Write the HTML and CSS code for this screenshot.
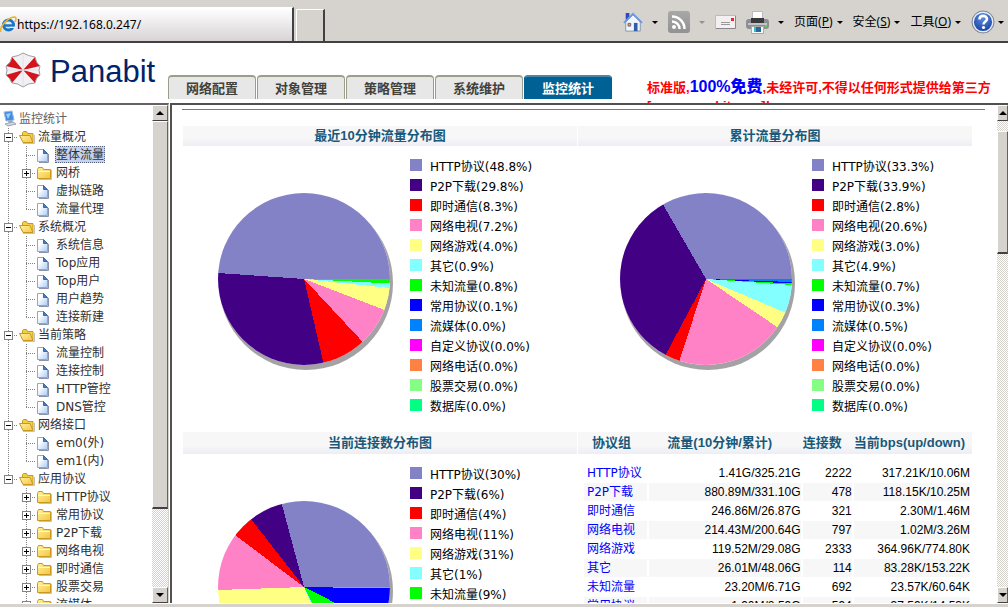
FILE: index.html
```html
<!DOCTYPE html>
<html lang="zh-CN">
<head>
<meta charset="utf-8">
<title>Panabit</title>
<link rel="stylesheet" href="styles.css">
</head>
<body>
<svg class="defs" aria-hidden="true">
  <defs>
    <linearGradient id="gold" x1="0" y1="0" x2="1" y2="1"><stop offset="0" stop-color="#fff3a0"/><stop offset="1" stop-color="#f4c440"/></linearGradient>
    <linearGradient id="paper" x1="0" y1="0" x2="1" y2="1"><stop offset="0.3" stop-color="#fff"/><stop offset="1" stop-color="#a9cbf5"/></linearGradient>
    <linearGradient id="grey" x1="0" y1="0" x2="0" y2="1"><stop offset="0" stop-color="#a8a8a8"/><stop offset="1" stop-color="#929292"/></linearGradient>
    <radialGradient id="orb" cx="0.5" cy="0.3" r="0.7"><stop offset="0" stop-color="#5b8ee0"/><stop offset="1" stop-color="#143a9c"/></radialGradient>
    <symbol id="page" viewBox="0 0 18 18"><path d="M3 16.500h9.500V8" fill="none" stroke="#8b93a8"/><path d="M1.500 3.500h6l4 4v8h-10z" fill="url(#paper)" stroke="#86a9dc"/><path d="M7.500 3.500v4h4z" fill="#4a7cc4" stroke="#3f68a8"/></symbol>
    <symbol id="folder" viewBox="0 0 18 18"><path d="M3 15.500h12.500V6" fill="none" stroke="#c5c1b5"/><path d="M1.500 14.500V5.500l1-2h4l1 2h7v9z" fill="url(#gold)" stroke="#c9981e"/><path d="M2 7.500h12" stroke="#fff8c8"/></symbol>
    <symbol id="open" viewBox="0 0 18 18"><path d="M5 15.500h11.500V7" fill="none" stroke="#c5c1b5"/><path d="M4.500 13V4.500l1-1h3l1 2h5.500v9z" fill="#f5cd4c" stroke="#c9981e"/><path d="M1.500 7.500h10.500l3 7h-10z" fill="url(#gold)" stroke="#c9981e"/></symbol>
  </defs>
</svg>
<header class="toolbar">
  <label class="address">
    <svg width="17" height="17" viewBox="0 0 17 17"><circle cx="8.500" cy="9" r="5" fill="none" stroke="#1876c8" stroke-width="3"/><path d="M4 9.500h10" stroke="#1876c8" stroke-width="2.500"/><path d="M10.500 12h5v-1.300h-5z" fill="#f0ecef"/><path d="M1 16C-1 11 8 1 15 1c2 1 1 3 0 5" fill="none" stroke="#e9b52b" stroke-width="1.600"/></svg>
    <input type="text" value="https://192.168.0.247/" aria-label="Address">
  </label>
  <div class="new-tab"></div>
  <nav class="commands">
    <button class="command" aria-label="Home"><svg width="20" height="22" viewBox="0 0 22 22"><path d="M3 1h4v7L3 11z" fill="#3046c8"/><path d="M3 11l8-8 8 8v10H3z" fill="#f1f4fc" stroke="#8090b0"/><path d="M1 12L11 2l10 10" fill="none" stroke="#6a9be0" stroke-width="2"/><path d="M12 12h4v9h-4z" fill="#305da8"/><path d="M5.500 12.500h3v3h-3z" fill="#d8a060" stroke="#666"/></svg><i class="caret"></i></button>
    <button class="command" aria-label="Feeds"><svg width="22" height="22" viewBox="0 0 22 22"><rect width="22" height="22" rx="3" fill="url(#grey)"/><circle cx="6" cy="16" r="2" fill="#fff"/><path d="M4 10.500a7.500 7.500 0 0 1 7.500 7.500M4 5.500A12.500 12.500 0 0 1 16.500 18" fill="none" stroke="#fff" stroke-width="2.500"/></svg><i class="caret dim"></i></button>
    <button class="command" aria-label="Mail"><svg width="21" height="22" viewBox="0 0 21 22"><path d="M.5 4.500h20v13H.5z" fill="#f4f0f2" stroke="#bbb"/><path d="M1 17.500h19.500V5" fill="none" stroke="#888"/><path d="M16 7h3v3h-3z" fill="#e02c24"/><path d="M6 11.500h9M6 13.500h9" stroke="#999"/></svg></button>
    <button class="command" aria-label="Print"><svg width="23" height="23" viewBox="0 0 23 23"><path d="M6.500.5h10v9h-10z" fill="#fff" stroke="#bbb"/><rect y="8" width="23" height="10" rx="3" fill="#8d8e92"/><path d="M5 7h13v5H5z" fill="#3a3a3c"/><path d="M2 12h19v2H2z" fill="#c4c4c8"/><path d="M19 14h2v2h-2z" fill="#42e750"/><path d="M5.500 15.500h12v7h-12z" fill="#f8f8f8" stroke="#aaa"/><path d="M8 16h2v5H8z" fill="#35bcd0"/><path d="M10 16h5v5h-5z" fill="#286a98"/></svg><i class="caret"></i></button>
    <button class="command menu"><span>页面(<u>P</u>)</span><i class="caret"></i></button>
    <button class="command menu"><span>安全(<u>S</u>)</span><i class="caret"></i></button>
    <button class="command menu"><span>工具(<u>O</u>)</span><i class="caret"></i></button>
    <button class="command help" aria-label="Help"><svg width="24" height="24" viewBox="0 0 24 24"><circle cx="12" cy="12" r="11" fill="url(#orb)" stroke="#888" stroke-width="1"/><circle cx="12" cy="12" r="9.800" fill="none" stroke="#e8eefa" stroke-width="1.400"/><path d="M8.500 9.500c0-5 7.500-4.500 7.500-.5 0 2.500-3.500 2.500-3.500 5.500" fill="none" stroke="#fff" stroke-width="2.600"/><circle cx="12.500" cy="17.500" r="1.600" fill="#fff"/></svg><i class="caret"></i></button>
  </nav>
</header>
<div class="banner">
  <div class="brand">
    <svg width="36" height="36" viewBox="0 0 36 36"><path d="M7 5Q14 4 18 1q5 3 12 4 1 6 5 9-2 4 0 9-4 2-5 8-7 0-12 4-5-4-11-4-2-5-6-8 2-5 0-9 5-3 6-9z" fill="#f1f1f3"/><path d="M30 5q1 6 5 9L18 18zM35 23q-4 2-5 8L18 18zM7 31q-2-5-6-8l17-5zM1 14q5-3 6-9l11 13z" fill="#d5131c"/><path d="M18 18V2M18 18h16M18 18v16M18 18H2" stroke="#e2e2e6"/><path d="M7 5Q14 4 18 1q5 3 12 4 1 6 5 9-2 4 0 9-4 2-5 8-7 0-12 4-5-4-11-4-2-5-6-8 2-5 0-9 5-3 6-9z" fill="none" stroke="#9c9da3"/></svg>
    <span>Panabit</span>
  </div>
  <nav class="tabs">
    <button>网络配置</button><button>对象管理</button><button>策略管理</button><button>系统维护</button><button class="active">监控统计</button>
  </nav>
  <p class="notice">标准版,<strong>100%免费</strong>,未经许可,不得以任何形式提供给第三方<br>[www.panabit.com]!</p>
</div>
<div class="frames">
  <aside class="side">
    <ul class="tree">
      <li class="root"><svg width="18" height="18" viewBox="0 0 18 18"><path d="M3 2l8-1 2 9-8 1z" fill="#3f8de8" stroke="#9cb8dc"/><path d="M5 4l5-1-3 6z" fill="#9bd0ff"/><path d="M7 11l4-1 1 3-4 1z" fill="#9ba8bc"/><path d="M4 14l8-2 3 2-8 2z" fill="#d4dae4" stroke="#98a4b8"/></svg>监控统计</li>
      <li><i class="node"><button aria-label="收起"></button></i><svg class="icon"><use href="#open"/></svg><a href="#">流量概况</a></li>
      <li><i class="line"></i><i class="tee"></i><svg class="icon"><use href="#page"/></svg><a href="#" class="selected">整体流量</a></li>
      <li><i class="line"></i><i class="node"><button class="plus" aria-label="展开"></button></i><svg class="icon"><use href="#folder"/></svg><a href="#">网桥</a></li>
      <li><i class="line"></i><i class="tee"></i><svg class="icon"><use href="#page"/></svg><a href="#">虚拟链路</a></li>
      <li><i class="line"></i><i class="tee end"></i><svg class="icon"><use href="#page"/></svg><a href="#">流量代理</a></li>
      <li><i class="node"><button aria-label="收起"></button></i><svg class="icon"><use href="#open"/></svg><a href="#">系统概况</a></li>
      <li><i class="line"></i><i class="tee"></i><svg class="icon"><use href="#page"/></svg><a href="#">系统信息</a></li>
      <li><i class="line"></i><i class="tee"></i><svg class="icon"><use href="#page"/></svg><a href="#">Top应用</a></li>
      <li><i class="line"></i><i class="tee"></i><svg class="icon"><use href="#page"/></svg><a href="#">Top用户</a></li>
      <li><i class="line"></i><i class="tee"></i><svg class="icon"><use href="#page"/></svg><a href="#">用户趋势</a></li>
      <li><i class="line"></i><i class="tee end"></i><svg class="icon"><use href="#page"/></svg><a href="#">连接新建</a></li>
      <li><i class="node"><button aria-label="收起"></button></i><svg class="icon"><use href="#open"/></svg><a href="#">当前策略</a></li>
      <li><i class="line"></i><i class="tee"></i><svg class="icon"><use href="#page"/></svg><a href="#">流量控制</a></li>
      <li><i class="line"></i><i class="tee"></i><svg class="icon"><use href="#page"/></svg><a href="#">连接控制</a></li>
      <li><i class="line"></i><i class="tee"></i><svg class="icon"><use href="#page"/></svg><a href="#">HTTP管控</a></li>
      <li><i class="line"></i><i class="tee end"></i><svg class="icon"><use href="#page"/></svg><a href="#">DNS管控</a></li>
      <li><i class="node"><button aria-label="收起"></button></i><svg class="icon"><use href="#open"/></svg><a href="#">网络接口</a></li>
      <li><i class="line"></i><i class="tee"></i><svg class="icon"><use href="#page"/></svg><a href="#">em0(外)</a></li>
      <li><i class="line"></i><i class="tee end"></i><svg class="icon"><use href="#page"/></svg><a href="#">em1(内)</a></li>
      <li><i class="node last"><button aria-label="收起"></button></i><svg class="icon"><use href="#open"/></svg><a href="#">应用协议</a></li>
      <li><i class="blank"></i><i class="node"><button class="plus" aria-label="展开"></button></i><svg class="icon"><use href="#folder"/></svg><a href="#">HTTP协议</a></li>
      <li><i class="blank"></i><i class="node"><button class="plus" aria-label="展开"></button></i><svg class="icon"><use href="#folder"/></svg><a href="#">常用协议</a></li>
      <li><i class="blank"></i><i class="node"><button class="plus" aria-label="展开"></button></i><svg class="icon"><use href="#folder"/></svg><a href="#">P2P下载</a></li>
      <li><i class="blank"></i><i class="node"><button class="plus" aria-label="展开"></button></i><svg class="icon"><use href="#folder"/></svg><a href="#">网络电视</a></li>
      <li><i class="blank"></i><i class="node"><button class="plus" aria-label="展开"></button></i><svg class="icon"><use href="#folder"/></svg><a href="#">即时通信</a></li>
      <li><i class="blank"></i><i class="node"><button class="plus" aria-label="展开"></button></i><svg class="icon"><use href="#folder"/></svg><a href="#">股票交易</a></li>
      <li><i class="blank"></i><i class="node"><button class="plus" aria-label="展开"></button></i><svg class="icon"><use href="#folder"/></svg><a href="#">流媒体</a></li>
    </ul>
    <div class="scroll"><button class="up" aria-label="Up"></button><div class="thumb"></div><button class="down" aria-label="Down"></button></div>
  </aside>
  <main class="content">
    <div class="report">
      <hr>
      <div class="panels">
        <section>
          <h2>最近10分钟流量分布图</h2>
          <div class="chart">
            <div class="pie recent"></div>
            <ul class="legend">
              <li class="c1">HTTP协议(48.8%)</li><li class="c2">P2P下载(29.8%)</li><li class="c3">即时通信(8.3%)</li><li class="c4">网络电视(7.2%)</li><li class="c5">网络游戏(4.0%)</li><li class="c6">其它(0.9%)</li><li class="c7">未知流量(0.8%)</li><li class="c8">常用协议(0.1%)</li><li class="c9">流媒体(0.0%)</li><li class="c10">自定义协议(0.0%)</li><li class="c11">网络电话(0.0%)</li><li class="c12">股票交易(0.0%)</li><li class="c13">数据库(0.0%)</li>
            </ul>
          </div>
        </section>
        <section>
          <h2>累计流量分布图</h2>
          <div class="chart second">
            <div class="pie total"></div>
            <ul class="legend">
              <li class="c1">HTTP协议(33.3%)</li><li class="c2">P2P下载(33.9%)</li><li class="c3">即时通信(2.8%)</li><li class="c4">网络电视(20.6%)</li><li class="c5">网络游戏(3.0%)</li><li class="c6">其它(4.9%)</li><li class="c7">未知流量(0.7%)</li><li class="c8">常用协议(0.3%)</li><li class="c9">流媒体(0.5%)</li><li class="c10">自定义协议(0.0%)</li><li class="c11">网络电话(0.0%)</li><li class="c12">股票交易(0.0%)</li><li class="c13">数据库(0.0%)</li>
            </ul>
          </div>
        </section>
        <section class="lower">
          <h2>当前连接数分布图</h2>
          <div class="chart">
            <div class="pie links"></div>
            <ul class="legend">
              <li class="c1">HTTP协议(30%)</li><li class="c2">P2P下载(6%)</li><li class="c3">即时通信(4%)</li><li class="c4">网络电视(11%)</li><li class="c5">网络游戏(31%)</li><li class="c6">其它(1%)</li><li class="c7">未知流量(9%)</li>
            </ul>
          </div>
        </section>
        <section class="lower">
          <table>
            <thead><tr><th>协议组</th><th>流量(10分钟/累计)</th><th>连接数</th><th>当前bps(up/down)</th></tr></thead>
            <tbody>
              <tr><td><a href="#">HTTP协议</a></td><td>1.41G/325.21G</td><td>2222</td><td>317.21K/10.06M</td></tr>
              <tr><td><a href="#">P2P下载</a></td><td>880.89M/331.10G</td><td>478</td><td>118.15K/10.25M</td></tr>
              <tr><td><a href="#">即时通信</a></td><td>246.86M/26.87G</td><td>321</td><td>2.30M/1.46M</td></tr>
              <tr><td><a href="#">网络电视</a></td><td>214.43M/200.64G</td><td>797</td><td>1.02M/3.26M</td></tr>
              <tr><td><a href="#">网络游戏</a></td><td>119.52M/29.08G</td><td>2333</td><td>364.96K/774.80K</td></tr>
              <tr><td><a href="#">其它</a></td><td>26.01M/48.06G</td><td>114</td><td>83.28K/153.22K</td></tr>
              <tr><td><a href="#">未知流量</a></td><td>23.20M/6.71G</td><td>692</td><td>23.57K/60.64K</td></tr>
              <tr><td><a href="#">常用协议</a></td><td>1.90M/2.59G</td><td>594</td><td>37.59K/14.53K</td></tr>
            </tbody>
          </table>
        </section>
      </div>
    </div>
    <div class="scroll wide"><button class="up" aria-label="Up"></button><div class="thumb"></div><button class="down" aria-label="Down"></button></div>
  </main>
</div>
<footer class="edge"></footer>
</body>
</html>
```
FILE: styles.css
```css
* { box-sizing: border-box; }
body {
  margin: 0; height: 100vh; overflow: hidden;
  display: flex; flex-direction: column;
  background: #fff; color: #000;
  font: 12px/18px "DejaVu Sans", "Noto Sans CJK SC", sans-serif;
}
button { font: inherit; color: inherit; padding: 0; border: 0; background: none; }
ul { list-style: none; margin: 0; padding: 0; }
i { font-style: normal; }
svg { flex: none; }
.defs { position: absolute; width: 0; height: 0; }

.toolbar {
  flex: none; height: 43px; display: flex; align-items: flex-end;
  background: #d6d3ce; border-bottom: 2px solid #424142;
}
.address {
  display: flex; align-items: center; flex: 0 1 294px; height: 34px;
  border-top: 1px solid #fff; border-right: 2px solid #424142;
  background: linear-gradient(#fff, #d9d3d6);
}
.address input {
  flex: 1; min-width: 0; border: 0; padding: 0; background: none;
  font: 12px "Noto Sans", sans-serif; color: #000;
}
.new-tab { width: 29px; height: 32px; margin-left: 2px; border: 1px solid #fff; border-right: 2px solid #424142; border-bottom: 0; }
.commands { margin-left: auto; height: 38px; padding-right: 4px; display: flex; align-items: center; gap: 10px; }
.command { display: flex; align-items: center; gap: 9px; font-family: "Noto Sans", "Noto Sans CJK SC", sans-serif; }
.command.menu { gap: 4px; white-space: nowrap; }
.command.help { gap: 3px; }
.caret { border: 3px solid transparent; border-top-color: #000; border-bottom: 0; }
.caret.dim { border-top-color: #949294; }

.banner { flex: none; height: 60px; display: flex; overflow: hidden; }
.brand { width: 168px; padding: 9px 0 0 5px; display: flex; flex: none; gap: 9px; color: #00246b; font: 31px/39px "Liberation Sans", sans-serif; }
.tabs { display: flex; flex: none; gap: 1px; margin-top: 32px; height: 24px; }
.tabs button {
  width: 88px; border: 1px solid #9c9e8c; border-top-width: 2px; border-bottom: 0; border-radius: 4px 4px 0 0;
  background: #e7e7e7; color: #42413a; font: bold 13px/21px "Liberation Sans", "Noto Sans CJK SC", sans-serif;
}
.tabs .active { background: #006194; color: #fff; border-color: #4a86a5 #006194; }
.notice { margin: 36px 0 0 35px; flex: 1; color: #f00; font: bold 13px/18px "Liberation Sans", "Noto Sans CJK SC", sans-serif; }
.notice strong { color: #00f; font-size: 16px; line-height: 16px; }

.frames { flex: 1; min-height: 0; display: flex; }
.side { width: 169px; flex: none; display: flex; border-top: 2px solid #636163; border-right: 1px solid #d6d3ce; overflow: hidden; }
.tree { flex: 1; padding-top: 5px; overflow: hidden; color: #313031; }
.tree li { display: flex; height: 18px; white-space: nowrap; }
.tree .root { color: #636163; padding-left: 1px; }
.tree a { color: inherit; text-decoration: none; margin-left: 1px; padding: 0 1px; }
.tree .selected { background: #c6d3ef; outline: 1px dotted #55607c; outline-offset: -1px; height: 17px; }
.icon { width: 18px; height: 18px; }
.line, .node, .tee, .blank { width: 18px; flex: none; display: flex; align-items: center; background-repeat: no-repeat; }
.line, .node, .tee {
  background-image: repeating-linear-gradient(#848284 0 1px, transparent 1px 2px), repeating-linear-gradient(90deg, #848284 0 1px, transparent 1px 2px);
  background-size: 1px 18px, 10px 1px; background-position: 8px 0, 8px 9px;
}
.line { background-size: 1px 18px, 0 0; }
.tee.end, .node.last { background-size: 1px 9px, 10px 1px; }
.node button {
  width: 9px; height: 9px; margin-left: 4px; border: 1px solid #848284;
  background: linear-gradient(#000, #000) center / 5px 1px no-repeat, #fff;
}
.node .plus { background: linear-gradient(#000, #000) center / 5px 1px no-repeat, linear-gradient(#000, #000) center / 1px 5px no-repeat, #fff; }

.scroll { width: 16px; flex: none; display: flex; flex-direction: column; background: repeating-conic-gradient(#fff 0 25%, #d6d3ce 0 50%) 0 0 / 2px 2px; }
.scroll button, .thumb { border: 1px solid; border-color: #fff #636163 #424142 #fff; background: #d6d3ce; flex: none; }
.scroll button { height: 16px; display: grid; place-items: center; }
.scroll button::before { content: ""; border: 4px solid transparent; }
.scroll .up::before { border-top: 0; border-bottom-color: #000; }
.scroll .down::before { border-bottom: 0; border-top-color: #000; }
.thumb { height: 78%; border-bottom-width: 2px; }
.scroll .down { margin-top: auto; }
.scroll.wide { width: 11px; overflow: hidden; }
.wide .thumb { height: 123px; margin-top: 10px; }

.content { flex: 1; min-width: 0; display: flex; border-top: 2px solid #525152; border-left: 2px solid #525152; margin-left: 1px; overflow: hidden; }
.report { flex: 1; min-width: 0; overflow: hidden; padding: 4px 12px 0 10px; }
hr { height: 1px; border: 0; margin: 0; background: #7b7984; }
.panels { display: grid; grid-template-columns: 1fr 1fr; gap: 16px 1px; margin: 16px 13px 0 1px; }
h2 { margin: 0; height: 20px; text-align: center; }
h2, thead { background: linear-gradient(#f7f7f7 60%, #ededf5); }
h2, th { color: #18597b; font: bold 13px/20px "Liberation Sans", "Noto Sans CJK SC", sans-serif; }
.lower h2, .lower th { height: 22px; line-height: 22px; }
.chart { display: flex; gap: 20px; align-items: flex-start; padding: 10px 0 0 35px; }
.chart.second { padding-left: 42px; }
.pie { width: 172px; height: 172px; flex: none; margin-top: 37px; border-radius: 50%; box-shadow: 2px 4px 0 1px #a5a2a5; }
.recent { background: conic-gradient(from 90deg, #0f0 0 3deg, #84ffff 0 6deg, #ffff84 0 21deg, #ff82c6 0 47deg, #f00 0 77deg, #420084 0 184deg, #8482c6 0); }
.total { background: conic-gradient(from 90deg, #0082ff 0 2deg, #00f 0 3deg, #0f0 0 4deg, #84ffff 0 23deg, #ffff84 0 34deg, #ff82c6 0 108deg, #f00 0 118deg, #420084 0 240deg, #8482c6 0); }
.links { background: conic-gradient(from 90deg, #a5a2a5 0 1deg, #00f 0 27deg, #0f0 0 64deg, #84ffff 0 67deg, #ffff84 0 178deg, #ff82c6 0 217deg, #f00 0 232deg, #420084 0 255deg, #8482c6 0); }
.legend li { display: flex; gap: 8px; line-height: 22px; height: 20px; white-space: nowrap; }
.legend li::before { content: ""; width: 12px; height: 12px; margin-top: 3px; background: var(--c); }
.c1 { --c: #8482c6; } .c2 { --c: #420084; } .c3 { --c: #f00; } .c4 { --c: #ff82c6; } .c5 { --c: #ffff84; }
.c6 { --c: #84ffff; } .c7 { --c: #0f0; } .c8 { --c: #00f; } .c9 { --c: #0082ff; } .c10 { --c: #f0f; }
.c11 { --c: #ff8242; } .c12 { --c: #84ff84; } .c13 { --c: #00ff84; }

table { width: 100%; border-collapse: separate; border-spacing: 0; table-layout: fixed; }
th { padding: 0 12px 0 0; white-space: nowrap; }
th:first-child { width: 18%; padding-right: 4px; }
th:nth-child(2) { width: 39%; }
th:nth-child(3) { width: 13%; }
th:last-child { padding-right: 16px; }
tbody::before { content: ""; display: block; height: 10px; }
td { height: 19px; padding: 0; border: solid #fff; border-width: 0 2px 1px 0; text-align: right; font: 12px/18px "Liberation Sans", sans-serif; }
td:first-child { border-left-width: 6px; padding-left: 3px; text-align: left; font: 12px/18px "DejaVu Sans", "Noto Sans CJK SC", sans-serif; }
tbody tr:nth-child(even) td { background: #f7f7f7; }
td a { color: #00f; text-decoration: none; }

.edge { flex: none; height: 4px; background: #d6d3ce; border-top: 1px solid #fff; }
```
